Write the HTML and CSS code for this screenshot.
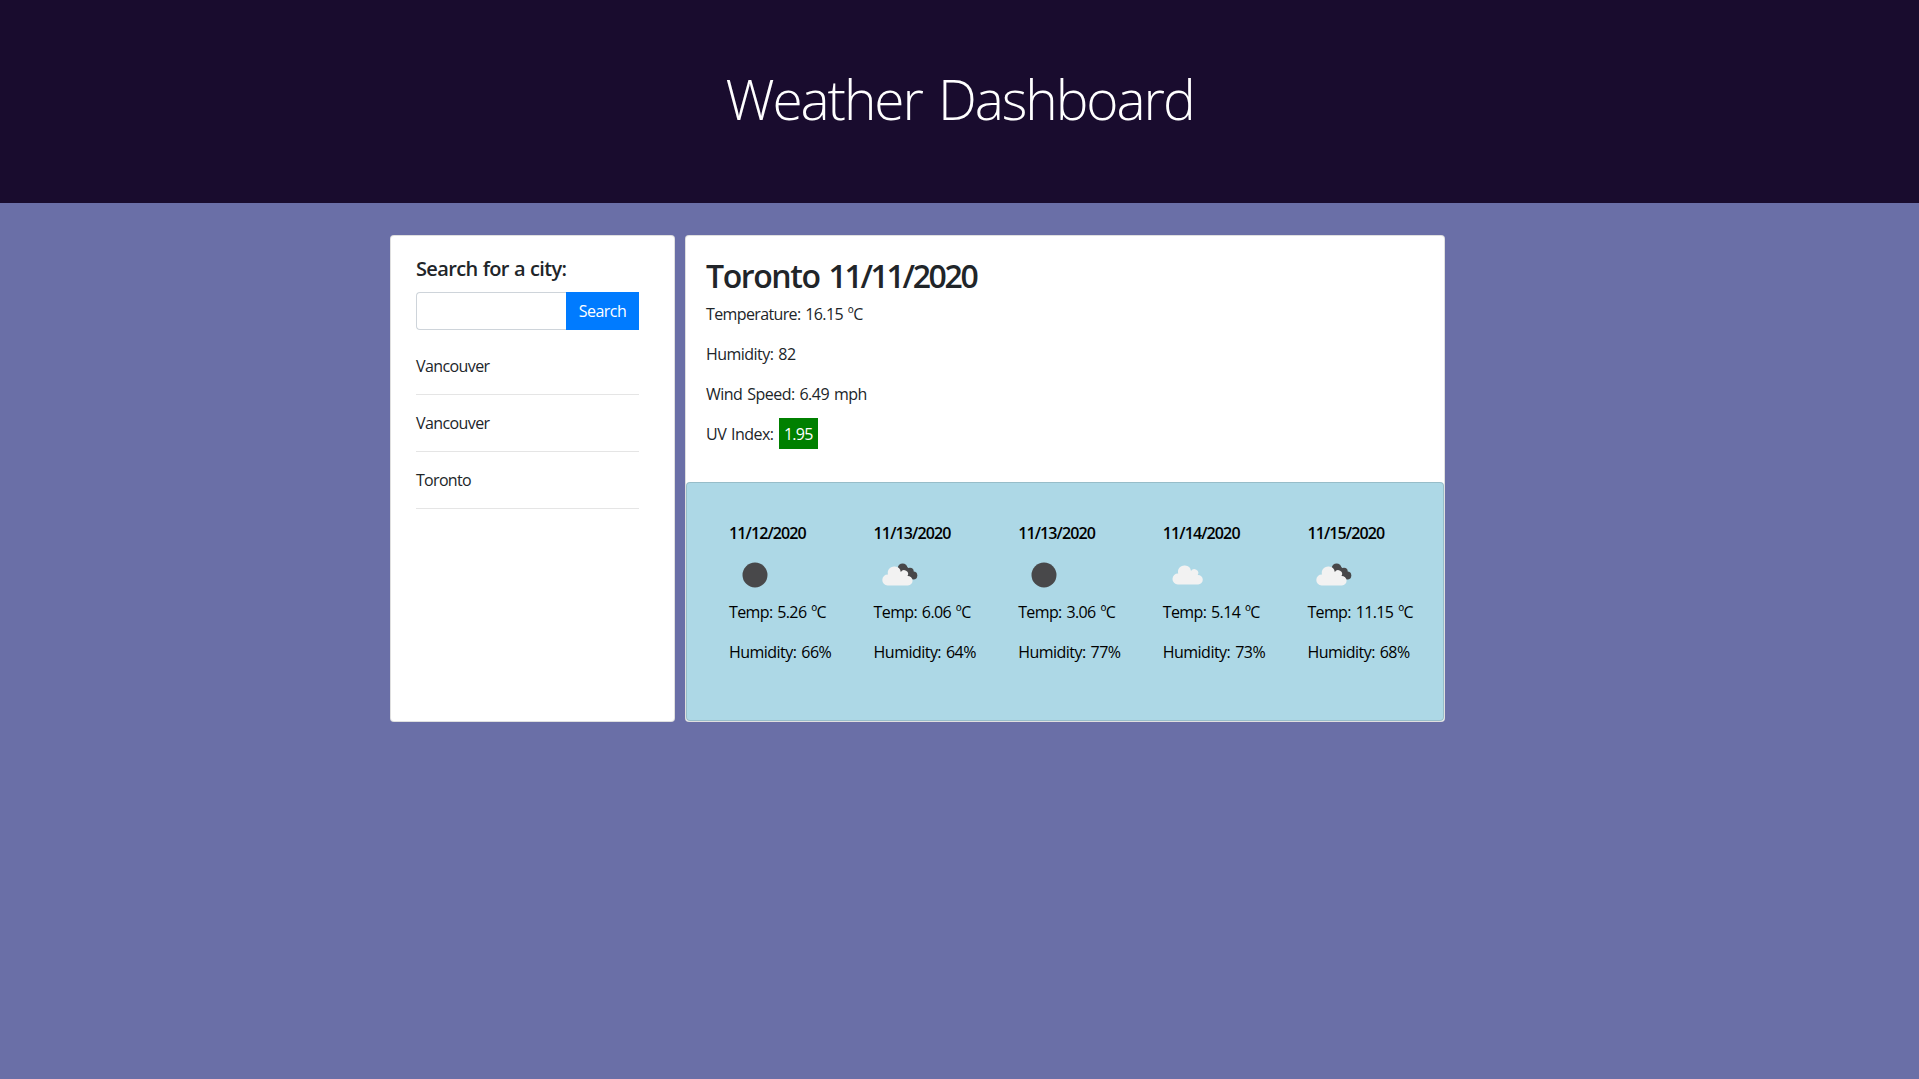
FILE: index.html
```
<!DOCTYPE html>
<html lang="en">
<head>
<meta charset="utf-8">
<title>Weather Dashboard</title>
<link rel="stylesheet" href="styles.css">
</head>
<body>
<svg class="defs" aria-hidden="true">
  <symbol id="moon" viewBox="0 0 50 50"><circle cx="25" cy="25" r="12.5" fill="#48484a"/></symbol>
  <symbol id="cloud-shape" viewBox="0 0 50 50">
    <path d="M14.8 34.5a5.4 5.4 0 0 1-5.3-5.5 5.4 5.4 0 0 1 5.7-5.4 6.3 6.3 0 0 1 6.8-8.1 6.4 6.4 0 0 1 6 5.6 3.7 3.7 0 0 1 6.7 3.9 4.8 4.8 0 0 1 5.1 4.7 4.8 4.8 0 0 1-4.7 4.8z"/>
  </symbol>
  <symbol id="cloud" viewBox="0 0 50 50"><use href="#cloud-shape" width="50" height="50" fill="#f2f2f2"/></symbol>
  <symbol id="clouds" viewBox="0 0 50 50">
    <g fill="#48484a">
      <circle cx="28.6" cy="18.2" r="4.8"/>
      <circle cx="36" cy="21.4" r="3.7"/>
      <circle cx="39.3" cy="25.6" r="4"/>
      <path d="M26 21l6-5 9 8-4 5.4z"/>
    </g>
    <g transform="translate(-1.2 1)"><use href="#cloud-shape" width="50" height="50" fill="#f2f2f2"/></g>
  </symbol>
</svg>
<header class="banner"><h1 class="banner-title">Weather Dashboard</h1></header>
<main class="dashboard">
  <aside class="card search-card">
    <h5 class="search-title">Search for a city:</h5>
    <form class="search-form">
      <input class="search-input" type="text" aria-label="City">
      <button class="search-button" type="button">Search</button>
    </form>
    <ul class="history">
      <li class="history-item">Vancouver</li>
      <li class="history-item">Vancouver</li>
      <li class="history-item history-toronto">Toronto</li>
    </ul>
  </aside>
  <section class="card weather-card">
    <div class="current">
      <h2 class="current-title">Toronto <span class="current-date">11/11/2020</span></h2>
      <p class="line reading">Temperature: 16.15 ºC</p>
      <p class="line">Humidity: 82</p>
      <p class="line wind">Wind Speed: 6.49 mph</p>
      <p class="line">UV Index: <span class="uv">1.95</span></p>
    </div>
    <div class="card forecast">
      <article class="day"><h6 class="date">11/12/2020</h6><svg class="icon"><use href="#moon"/></svg><p class="line reading">Temp: 5.26 ºC</p><p class="line">Humidity: 66%</p></article>
      <article class="day"><h6 class="date">11/13/2020</h6><svg class="icon"><use href="#clouds"/></svg><p class="line reading">Temp: 6.06 ºC</p><p class="line">Humidity: 64%</p></article>
      <article class="day"><h6 class="date">11/13/2020</h6><svg class="icon"><use href="#moon"/></svg><p class="line reading">Temp: 3.06 ºC</p><p class="line">Humidity: 77%</p></article>
      <article class="day"><h6 class="date">11/14/2020</h6><svg class="icon"><use href="#cloud"/></svg><p class="line reading">Temp: 5.14 ºC</p><p class="line">Humidity: 73%</p></article>
      <article class="day"><h6 class="date">11/15/2020</h6><svg class="icon"><use href="#clouds"/></svg><p class="line reading">Temp: 11.15 ºC</p><p class="line">Humidity: 68%</p></article>
    </div>
  </section>
</main>
</body>
</html>
```
FILE: styles.css
```
* { box-sizing: border-box; }

body {
  margin: 0;
  background: #6a6fa7;
  color: #212529;
  font: 400 16px/24px "Open Sans", "Noto Sans", sans-serif;
  letter-spacing: -0.5px;
}

h1, h2, h5, h6, p, ul { margin: 0; padding: 0; }

.defs { display: none; }

.banner {
  height: 203px;
  padding-top: 65px;
  background: #190c2e;
  color: #fff;
  text-align: center;
}

.banner-title {
  font-size: 55px;
  font-weight: 300;
  line-height: 67px;
  letter-spacing: -2.08px;
  word-spacing: 4px;
}

.dashboard {
  display: flex;
  gap: 10px;
  padding: 32px 0 0 390px;
}

.card {
  border: 1px solid rgba(0, 0, 0, 0.125);
  border-radius: 4px;
  background-color: #fff;
}

.search-card {
  width: 285px;
  height: 487px;
  padding: 21px 35px 0 25px;
}

.search-title {
  font-size: 20px;
  font-weight: 600;
  line-height: 24px;
  letter-spacing: -0.65px;
  word-spacing: 0.6px;
}

.search-form {
  display: flex;
  margin-top: 11px;
}

.search-input {
  flex: 1;
  min-width: 0;
  height: 38px;
  border: 1px solid #ced4da;
  border-right: 0;
  border-radius: 4px 0 0 4px;
}

.search-button {
  width: 73px;
  height: 38px;
  padding: 0;
  border: 0;
  background: #007bff;
  color: #fff;
  font: inherit;
  letter-spacing: -0.55px;
}

.history {
  padding-top: 24px;
  list-style: none;
  letter-spacing: -0.6px;
}

.history-item {
  height: 41px;
  margin-bottom: 16px;
  border-bottom: 1px solid rgba(0, 0, 0, 0.1);
}

.history-toronto { letter-spacing: -0.7px; }

.weather-card {
  display: flex;
  flex-direction: column;
  width: 760px;
  height: 487px;
}

.current {
  height: 246px;
  padding: 21px 20px 0;
}

.current-title {
  margin-bottom: 7px;
  font-size: 32px;
  font-weight: 600;
  line-height: 38px;
  letter-spacing: -1.4px;
  word-spacing: 2px;
}

.current-date { letter-spacing: -2.35px; }

.line {
  margin-bottom: 16px;
  letter-spacing: -0.53px;
  word-spacing: 1.3px;
}

.reading {
  letter-spacing: -0.63px;
}

.uv {
  display: inline-block;
  width: 39px;
  height: 31px;
  margin: -4px 0 -4px 0.5px;
  padding-left: 5px;
  background: green;
  color: #fff;
  line-height: 32px;
  letter-spacing: -0.75px;
}

.forecast {
  flex: 1;
  display: grid;
  grid-template-columns: repeat(5, 144.6px);
  padding: 38px 0 0 42px;
  background-color: lightblue;
  color: #000;
}

.date {
  font-size: 16px;
  font-weight: 600;
  line-height: 24px;
  letter-spacing: -0.88px;
}

.icon {
  display: block;
  width: 50px;
  height: 50px;
  margin: 5px 0 0 0.6px;
}
```
